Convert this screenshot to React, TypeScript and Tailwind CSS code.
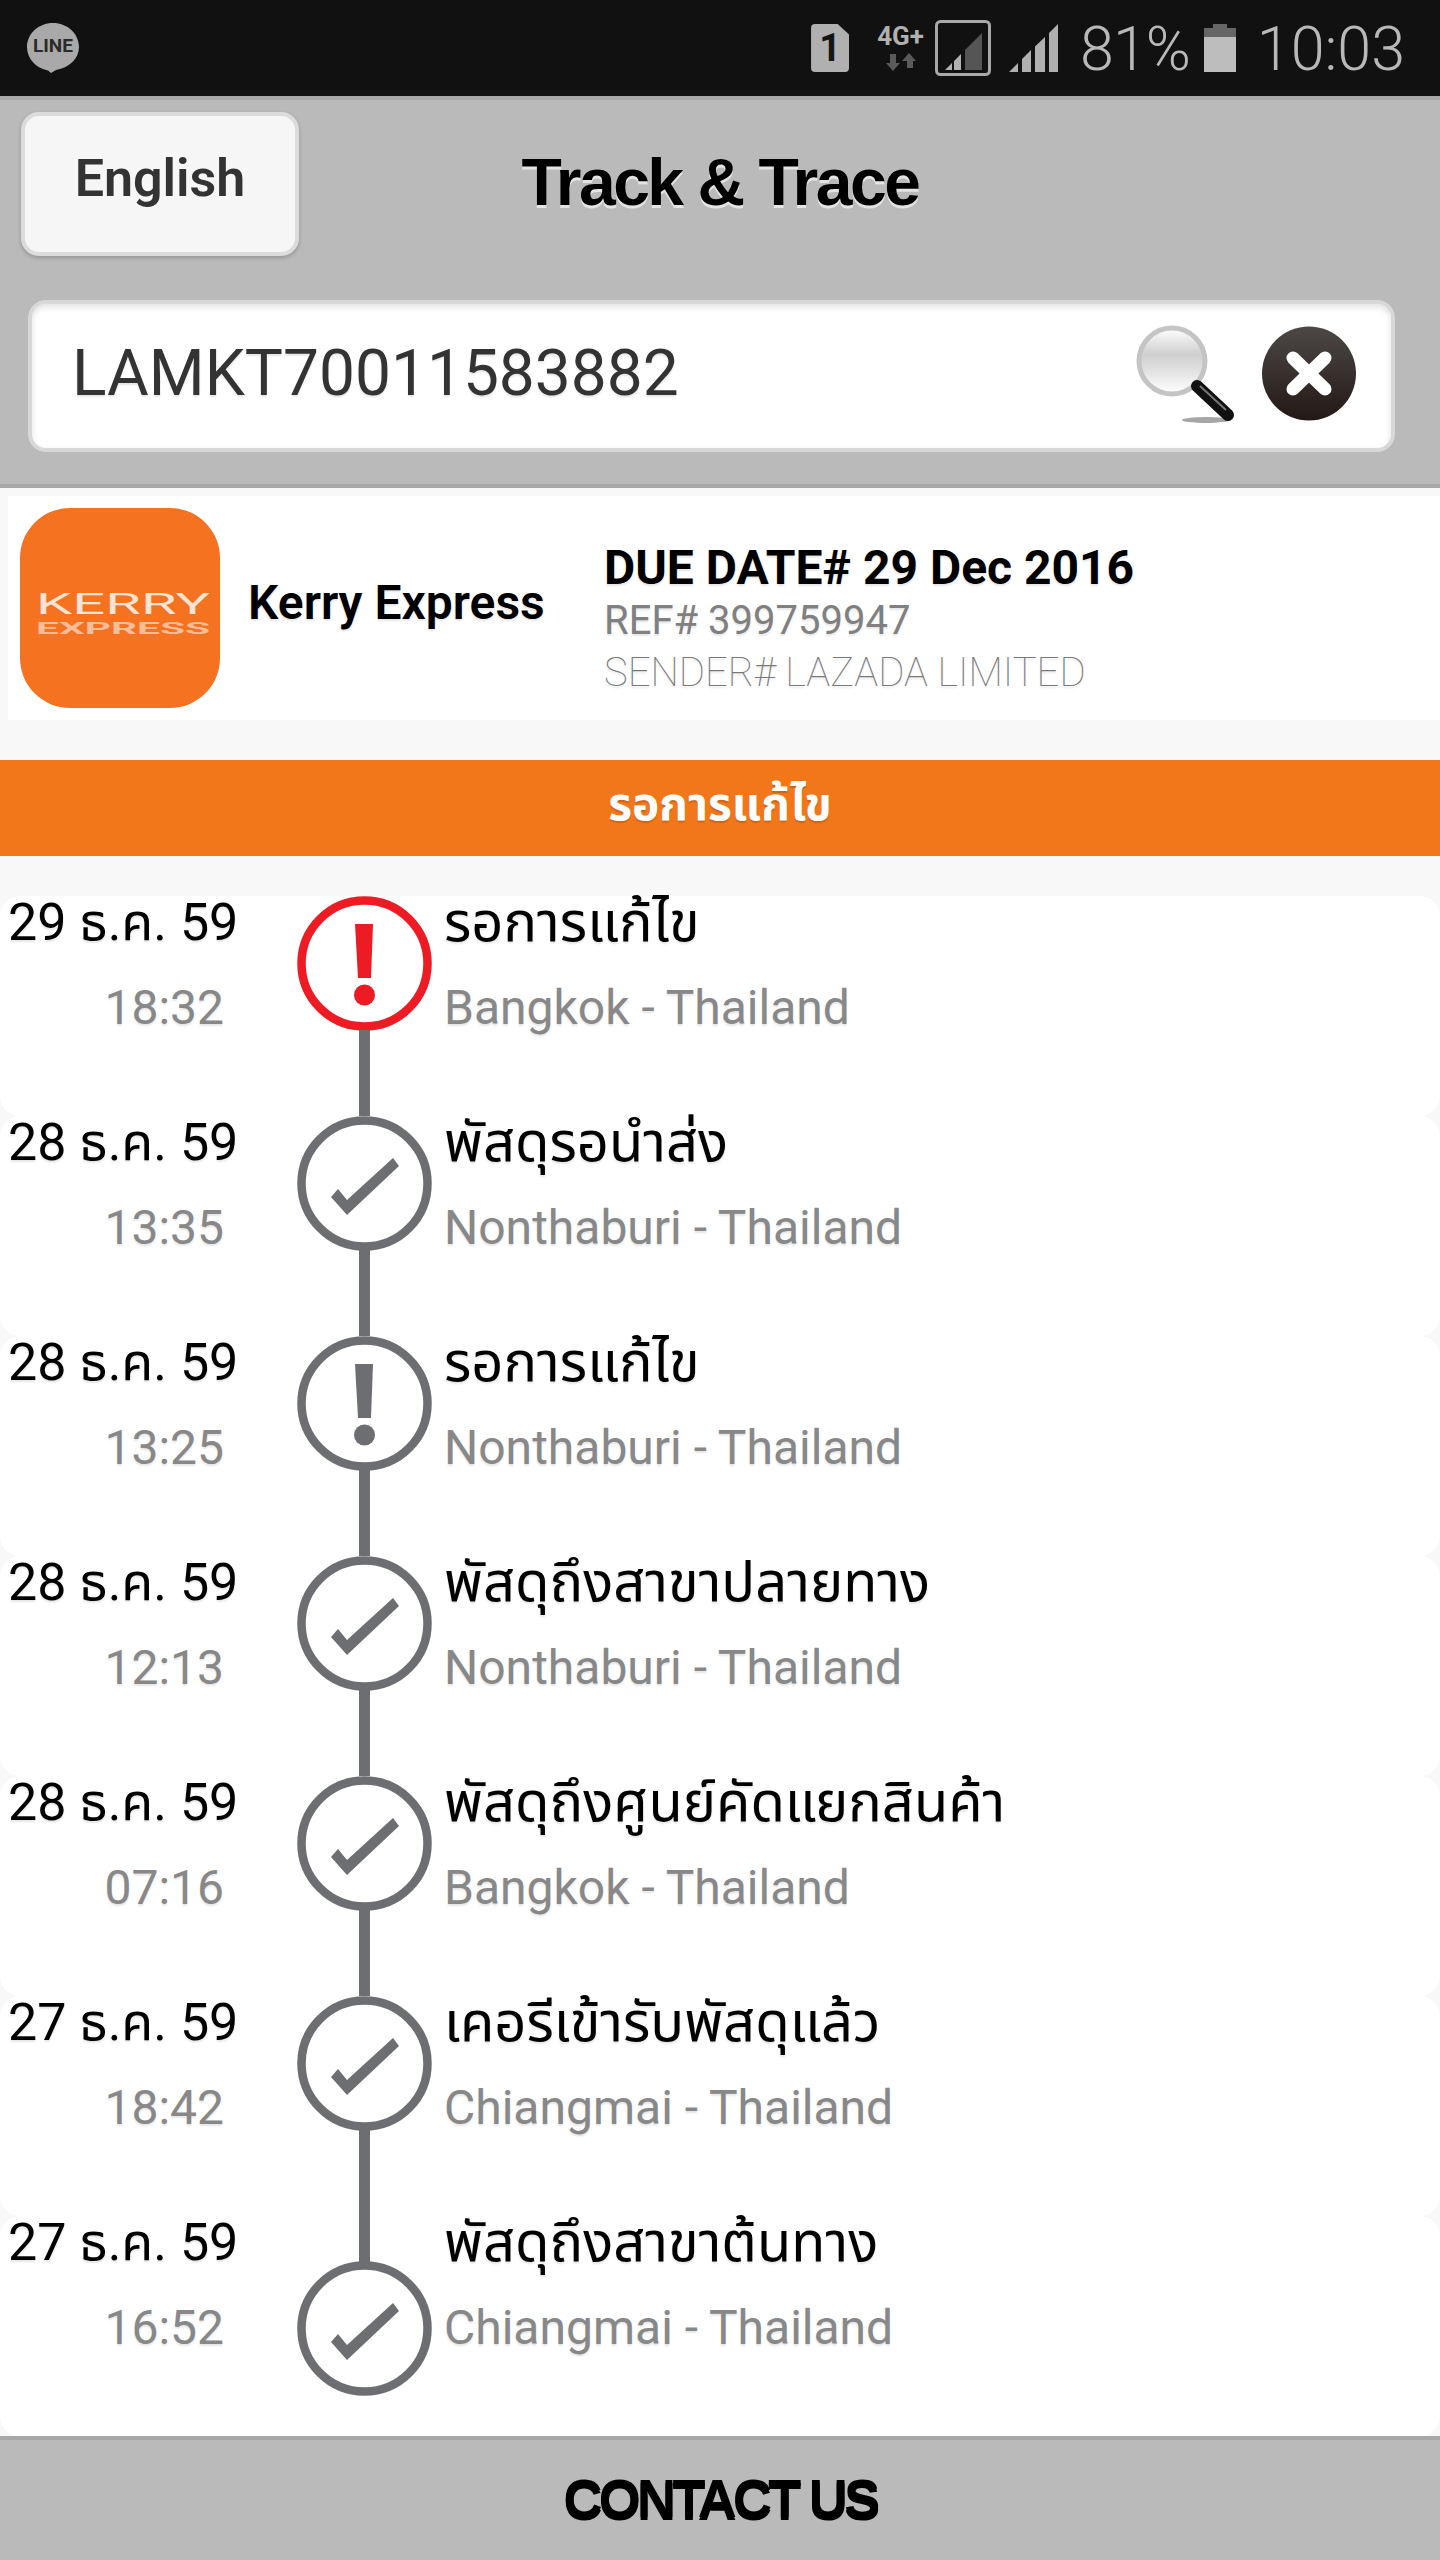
const softShadow = "[text-shadow:0_2px_2px_rgba(0,0,0,0.1)]";

type RowIcon = "alert" | "warn" | "check";

const rows: { date: string; time: string; title: string; place: string; icon: RowIcon }[] = [
  { date: "29 ธ.ค. 59", time: "18:32", title: "รอการแก้ไข", place: "Bangkok - Thailand", icon: "alert" },
  { date: "28 ธ.ค. 59", time: "13:35", title: "พัสดุรอนำส่ง", place: "Nonthaburi - Thailand", icon: "check" },
  { date: "28 ธ.ค. 59", time: "13:25", title: "รอการแก้ไข", place: "Nonthaburi - Thailand", icon: "warn" },
  { date: "28 ธ.ค. 59", time: "12:13", title: "พัสดุถึงสาขาปลายทาง", place: "Nonthaburi - Thailand", icon: "check" },
  { date: "28 ธ.ค. 59", time: "07:16", title: "พัสดุถึงศูนย์คัดแยกสินค้า", place: "Bangkok - Thailand", icon: "check" },
  { date: "27 ธ.ค. 59", time: "18:42", title: "เคอรีเข้ารับพัสดุแล้ว", place: "Chiangmai - Thailand", icon: "check" },
  { date: "27 ธ.ค. 59", time: "16:52", title: "พัสดุถึงสาขาต้นทาง", place: "Chiangmai - Thailand", icon: "check" },
];

function StatusIcon({ icon }: { icon: RowIcon }) {
  const color = icon === "alert" ? "#ed1c24" : "#6d6e71";
  return (
    <svg viewBox="0 0 135 135" className="w-[135px] h-[135px] shrink-0">
      <circle cx="67.5" cy="67.5" r="63" fill="#fff" stroke={color} strokeWidth="8.5" />
      {icon === "check" ? (
        <polygon points="34,81 50,99 102,50 96,42 50,84 41,73" fill={color} />
      ) : (
        <>
          <polygon points="58,28 76,28 74,82 61,82" fill={color} />
          <circle cx="67.5" cy="99" r="10.5" fill={color} />
        </>
      )}
    </svg>
  );
}

function StatusBar() {
  return (
    <div className="h-[96px] bg-[#111111] flex items-center pl-[27px] pr-[35px] text-[#b8b8b8]">
      <svg viewBox="0 0 52 50" className="w-[52px] h-[50px]">
        <path d="M26 0C11.6 0 0 10.8 0 24c0 11.6 9 21.3 21 23.5L24 50l5-3C43 44.6 52 35.2 52 24 52 10.8 40.4 0 26 0z" fill="#a9a9a9" />
        <text x="26" y="29" textAnchor="middle" fontSize="19" fontWeight="700" fill="#2a2a2a" fontFamily="Roboto">LINE</text>
      </svg>
      <div className="ml-auto flex items-center">
        <div className="w-[38px] h-[48px] bg-[#b0b0b0] rounded-[4px] [clip-path:polygon(0_0,70%_0,100%_22%,100%_100%,0_100%)] flex items-center justify-center">
          <span className="text-[#151515] text-[38px] font-bold leading-none">1</span>
        </div>
        <div className="ml-[27px] w-[49px] flex flex-col items-center">
          <span className="text-[26px] leading-[22px] font-bold text-[#b0b0b0] whitespace-nowrap">4G+</span>
          <svg viewBox="0 0 30 18" className="w-[30px] h-[18px] mt-[6px]">
            <path d="M4 1h6v9h4l-7 8-7-8h4z M21 15h6V8h3l-7-8-7 8h5z" fill="#5a5a5a" />
          </svg>
        </div>
        <svg viewBox="0 0 56 56" className="ml-[10px] w-[56px] h-[56px]">
          <rect x="1.5" y="1.5" width="53" height="53" rx="4" fill="none" stroke="#a8a8a8" strokeWidth="3" />
          <path d="M10 50L17 43V50z M19 41L26 34V50H19z" fill="#b0b0b0" />
          <path d="M30 30L47 13V50H30z" fill="#555555" />
        </svg>
        <svg viewBox="0 0 49 48" className="ml-[18px] w-[49px] h-[48px]">
          <path d="M0 48L9 39V48z M13 35L22 26V48H13z M26 22.5L36 13V48H26z M40 9L49 0V48H40z" fill="#b0b0b0" />
        </svg>
        <span className="ml-[22px] text-[61px] leading-none tracking-[-1px] font-light mt-[2px]">81%</span>
        <div className="ml-[14px] w-[32px] h-[48px] flex flex-col items-center">
          <div className="w-[14px] h-[4px] bg-[#666666]" />
          <div className="w-full h-[9px] bg-[#666666]" />
          <div className="w-full flex-1 bg-[#bdbdbd]" />
        </div>
        <span className="ml-[21px] text-[61px] leading-none font-light mt-[2px]">10:03</span>
      </div>
    </div>
  );
}

function Header() {
  return (
    <div className="h-[392px] bg-[#bababa] border-t-[4px] border-b-[4px] border-[#a8a8a8] px-[21px] pt-[12px] flex flex-col">
      <div className="relative h-[144px] flex justify-center">
        <button className="absolute left-0 top-0 w-[278px] h-[144px] rounded-[18px] border-[4px] border-[#dcdcdc] bg-[#f6f6f6] shadow-[0_2px_4px_rgba(0,0,0,0.2)] text-[#333333] text-[52px] font-semibold leading-[100px] pb-[10px]">
          English
        </button>
        <h1 className="font-['Liberation_Sans',Arial,sans-serif] font-bold text-black text-[66px] tracking-[-2.5px] leading-[140px] [text-shadow:0_3px_0_#e4e4e4]">
          Track &amp; Trace
        </h1>
      </div>
      <div className="mt-[44px] ml-[7px] w-[1367px] h-[152px] rounded-[18px] border-[4px] border-[#d8d8d8] bg-white shadow-[inset_0_3px_6px_rgba(0,0,0,0.12)] flex items-center pl-[40px] pr-[35px] pb-[5px]">
        <span className={`text-[64px] text-[#333333] leading-none ${softShadow}`}>LAMKT70011583882</span>
        <svg viewBox="0 0 102 100" className="ml-auto w-[102px] h-[100px]">
          <defs>
            <linearGradient id="lens" x1="0" y1="0" x2="0" y2="1">
              <stop offset="0" stopColor="#ffffff" />
              <stop offset="0.4" stopColor="#cfcfcf" />
              <stop offset="0.7" stopColor="#e6e6e6" />
              <stop offset="1" stopColor="#ffffff" />
            </linearGradient>
          </defs>
          <ellipse cx="72" cy="96" rx="24" ry="3" fill="#000" opacity="0.35" />
          <circle cx="38" cy="37" r="33" fill="url(#lens)" stroke="#c4c4c4" strokeWidth="5" />
          <line x1="63" y1="62" x2="94" y2="91" stroke="#111" strokeWidth="12" strokeLinecap="round" />
          <line x1="66" y1="62" x2="92" y2="86" stroke="#777" strokeWidth="2" />
        </svg>
        <svg viewBox="0 0 94 95" className="ml-[26px] w-[94px] h-[95px]">
          <defs>
            <linearGradient id="closeFill" x1="0" y1="0" x2="0" y2="1">
              <stop offset="0" stopColor="#4c4846" />
              <stop offset="1" stopColor="#231815" />
            </linearGradient>
          </defs>
          <circle cx="47" cy="47.5" r="47" fill="url(#closeFill)" />
          <path d="M31 32L63 63M63 32L31 63" stroke="#fff" strokeWidth="13" strokeLinecap="round" />
        </svg>
      </div>
    </div>
  );
}

function Summary() {
  return (
    <div className="mt-[8px] ml-[8px] h-[224px] bg-white flex items-center pl-[12px]">
      <div className="w-[200px] h-[200px] rounded-[50px] bg-[#f57221] flex flex-col items-center justify-center">
        <svg viewBox="0 0 200 70" className="w-[200px] h-[70px]">
          <text x="103" y="41" textAnchor="middle" textLength="174" lengthAdjust="spacingAndGlyphs" fontSize="30" fontWeight="400" fill="#fde3d2" fontFamily="Roboto">KERRY</text>
          <text x="103" y="61" textAnchor="middle" textLength="174" lengthAdjust="spacingAndGlyphs" fontSize="17" fontWeight="700" fill="#f9bd98" fontFamily="Roboto">EXPRESS</text>
        </svg>
      </div>
      <div className={`ml-[28px] mb-[10px] w-[356px] text-black text-[48px] font-semibold whitespace-nowrap ${softShadow}`}>Kerry Express</div>
      <div className={`mt-[24px] flex flex-col ${softShadow}`}>
        <span className="text-[48px] leading-[54px] font-bold text-black">DUE DATE# 29 Dec 2016</span>
        <span className="text-[40px] leading-[52px] text-[#808080]">REF# 399759947</span>
        <span className="text-[40px] leading-[52px] font-thin text-[#777777]">SENDER# LAZADA LIMITED</span>
      </div>
    </div>
  );
}

function TimelineRow({ date, time, title, place, icon, isLast }: (typeof rows)[number] & { isLast: boolean }) {
  return (
    <div className="h-[220px] bg-white rounded-[20px] flex">
      <div className={`w-[297px] pl-[8px] flex flex-col gap-[32px] ${softShadow}`}>
        <span className="text-[52px] leading-[53px] text-black">{date}</span>
        <span className="text-[48px] leading-[54px] text-[#888888] w-[216px] text-right">{time}</span>
      </div>
      <div className="w-[135px] h-full flex flex-col items-center">
        {isLast && <div className="w-[11px] h-[47px] bg-[#6d6e71] shrink-0 -mb-[2px]" />}
        <StatusIcon icon={icon} />
        {!isLast && <div className="w-[11px] flex-1 bg-[#6d6e71] -mt-[1px]" />}
      </div>
      <div className={`pl-[12px] flex flex-col gap-[32px] ${softShadow}`}>
        <span className="text-[56px] leading-[53px] text-black whitespace-nowrap">{title}</span>
        <span className="text-[48px] leading-[54px] text-[#888888]">{place}</span>
      </div>
    </div>
  );
}

export default function App() {
  return (
    <div className="w-[1440px] h-[2560px] bg-[#f8f8f8] flex flex-col overflow-hidden font-['Roboto','Noto_Sans_Thai',sans-serif]">
      <StatusBar />
      <Header />
      <Summary />
      <div className="mt-[40px] h-[96px] bg-[#f2771a] flex items-center justify-center pb-[8px] text-white text-[46px] font-bold [text-shadow:0_2px_1px_rgba(0,0,0,0.15)]">
        รอการแก้ไข
      </div>
      <div className="mt-[40px] flex flex-col">
        {rows.map((row, i) => (
          <TimelineRow key={row.time} {...row} isLast={i === rows.length - 1} />
        ))}
      </div>
      <div className="h-[124px] bg-[#bababa] border-t-[4px] border-[#a8a8a8] flex items-center justify-center pb-[3px]">
        <span className="font-['Liberation_Sans',Arial,sans-serif] font-bold text-black text-[54px] tracking-[-3.7px] [text-shadow:0_3px_0_#000]">
          CONTACT US
        </span>
      </div>
    </div>
  );
}
